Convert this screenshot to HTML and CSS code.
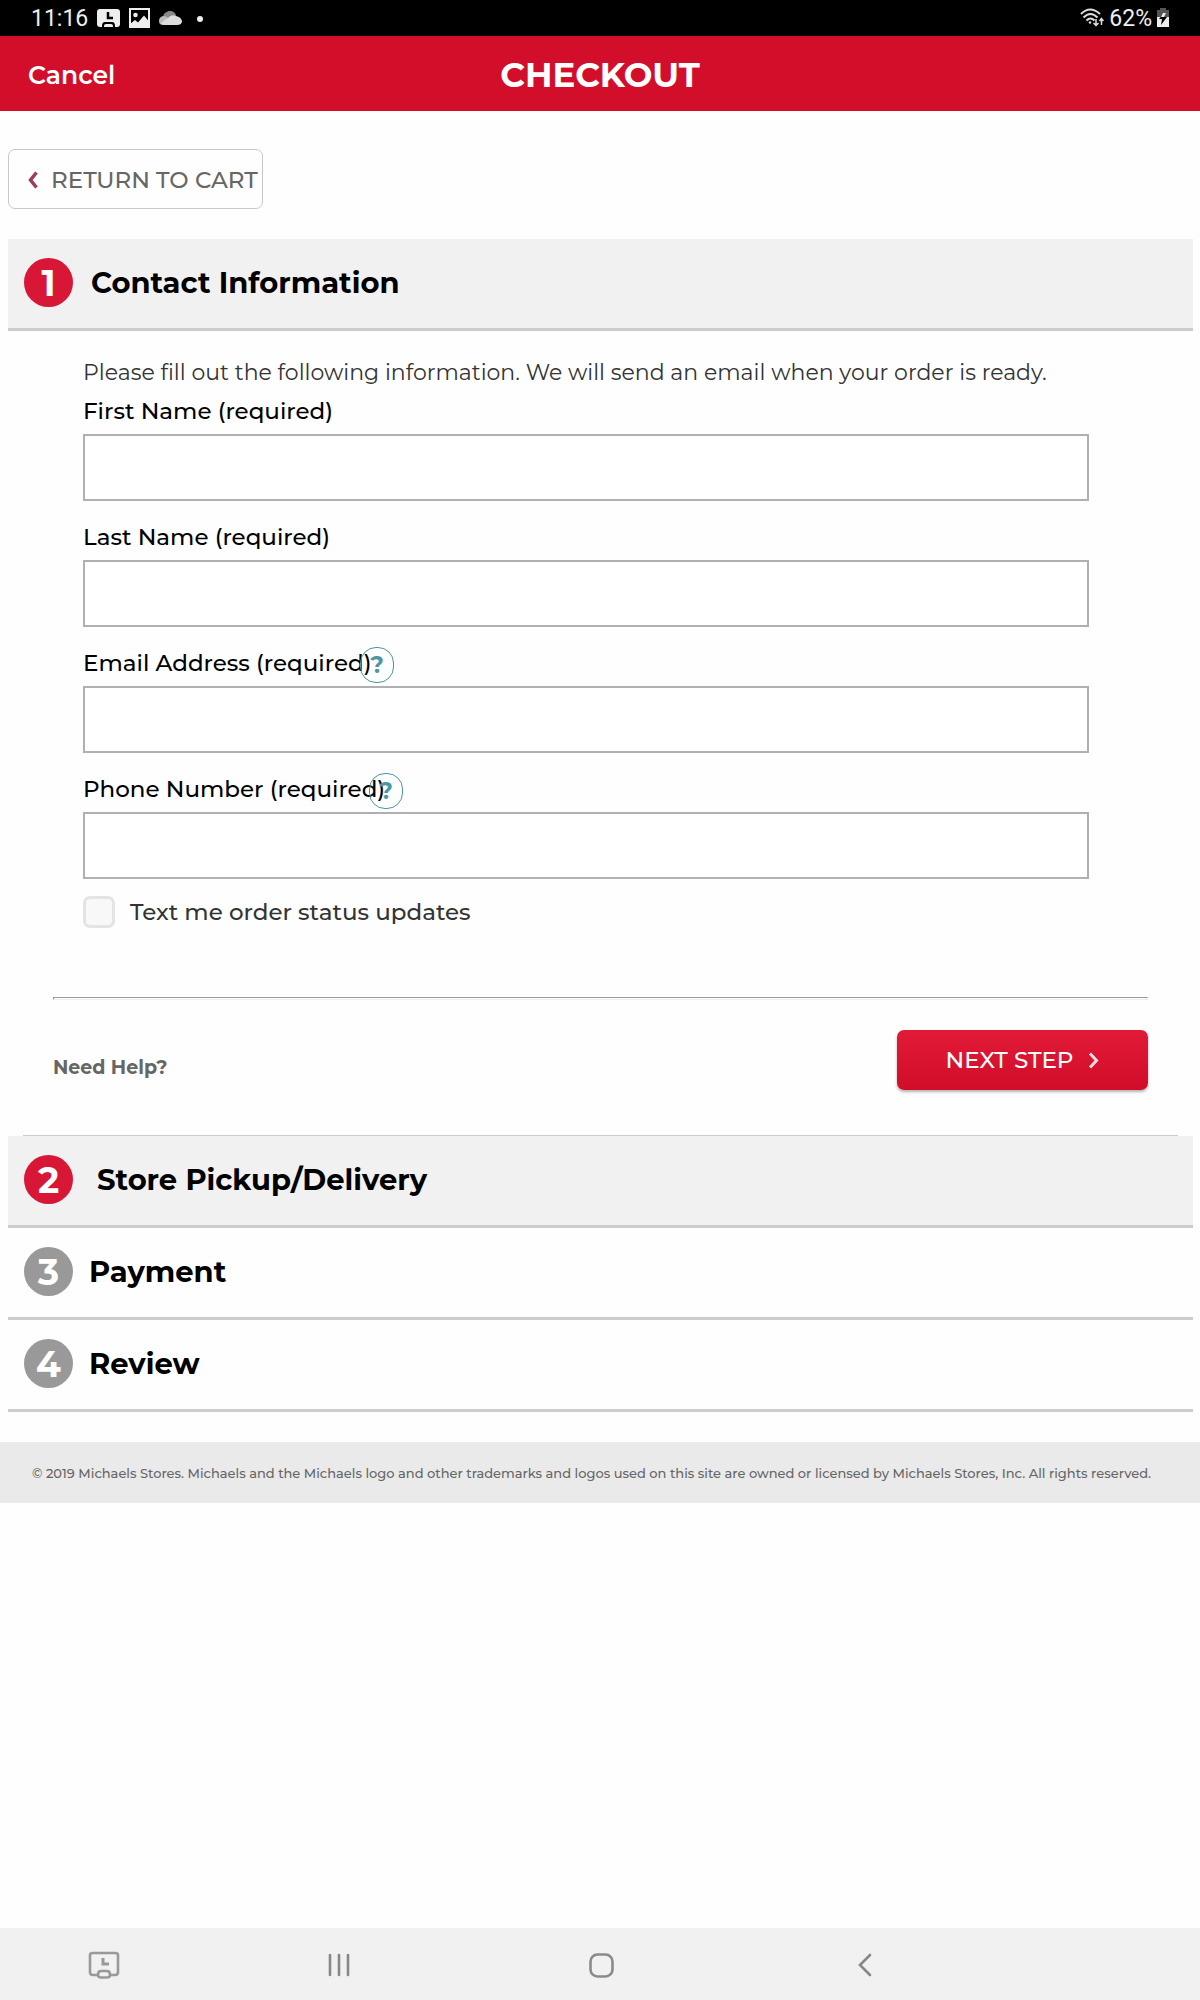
FILE: index.html
```html
<!DOCTYPE html>
<html lang="en">
<head>
<meta charset="utf-8">
<meta name="viewport" content="width=device-width, initial-scale=1">
<title>Checkout</title>
<link rel="stylesheet" href="styles.css">
</head>
<body>
<div class="status">
  <span class="status-text">11:16</span>
  <svg class="status-icon" width="23" height="20" viewBox="0 0 23 20" aria-hidden="true"><rect y="1" width="23" height="18" rx="3" fill="#eee"/><path d="M11 4v6h5" fill="none" stroke="#000" stroke-width="2.500"/><path d="M5 20v-2q0-4 3-4h7q3 0 3 4v2" fill="#000"/><path d="M7 19v-1q0-2 2-2h5q2 0 2 2v1z" fill="#eee"/></svg>
  <svg class="status-icon" width="21" height="20" viewBox="0 0 21 20" aria-hidden="true"><rect x="1" y="1" width="19" height="18" fill="none" stroke="#eee" stroke-width="2"/><circle cx="6.500" cy="7" r="2.300" fill="#eee"/><path d="M1 16l5-4 3 2.500 6-7 5 6v6H1z" fill="#eee"/><path d="M3 17l4-3 4 2 4-5 4 5v2H3z" fill="#eee"/></svg>
  <svg class="status-icon" width="23" height="16" viewBox="0 0 23 16" aria-hidden="true"><path d="M4 8C4 3 8 1 11 1s6 2 6 5h-4L8 9z" fill="#888"/><path d="M0 11q0-4 4-5 4 0 6 3l8 5-3 1H4q-4 0-4-4z" fill="#bbb"/><path d="M9 8q3-4 8-2 5 1 6 5 0 4-5 4H5q-3-1-3-2z" fill="#ddd"/></svg>
  <span class="status-dot"></span>
  <span class="status-end">
    <svg width="24" height="19" viewBox="0 0 24 19" fill="none" stroke="#ddd" stroke-width="2" aria-hidden="true"><path d="M1 6q9-9 19 0M3.500 9.500q7-7 14 0M6.500 12.500q4-4 8 0"/><circle cx="10" cy="14.500" r="1.200" fill="#ddd" stroke="none"/><path d="M16 11v6m-2.500-2l2.500 2.500 2.500-2.500M21.500 17v-6m-2 2l2-2.500 2 2.500" stroke-width="1.500"/></svg>
    <span class="status-text">62%</span>
    <svg width="12" height="19" viewBox="0 0 12 19" aria-hidden="true"><path d="M3 0h6v2h3v8H0V2h3z" fill="#555"/><path d="M0 9h12v10H0z" fill="#eee"/><path d="M7 5L2 11h3l-1 6 6-8H7l1-4z" fill="#000"/><path d="M6 5h3L7 9H4z" fill="#eee"/></svg>
  </span>
</div>

<header class="topbar">
  <button class="cancel" type="button">Cancel</button>
  <h1 class="title">CHECKOUT</h1>
</header>

<main class="main">
  <a class="return" href="#cart">
    <svg width="10" height="18" viewBox="0 0 10 18" fill="none" stroke="#a03a5b" stroke-width="3.500" aria-hidden="true"><path d="M8.500 1.500L2.500 9l6 7.500"/></svg>
    RETURN TO CART
  </a>

  <h2 class="step step-open step-first"><span class="num">1</span>Contact Information</h2>

  <form class="form">
    <div class="fields">
      <p class="intro">Please fill out the following information. We will send an email when your order is ready.</p>
      <div class="field">
        <label for="first">First Name (required)</label>
        <input id="first" type="text">
      </div>
      <div class="field">
        <label for="last">Last Name (required)</label>
        <input id="last" type="text">
      </div>
      <div class="field">
        <label for="email">Email Address (required)</label>
        <button class="help help-email" type="button" aria-label="About email address">?</button>
        <input id="email" type="email">
      </div>
      <div class="field">
        <label for="phone">Phone Number (required)</label>
        <button class="help help-phone" type="button" aria-label="About phone number">?</button>
        <input id="phone" type="tel">
      </div>
      <label class="check"><input type="checkbox">Text me order status updates</label>
    </div>
    <hr class="rule">
    <div class="actions">
      <a class="need" href="#help">Need Help?</a>
      <button class="next" type="submit">NEXT STEP
        <svg width="11" height="17" viewBox="0 0 11 17" fill="none" stroke="#fbdde3" stroke-width="3" aria-hidden="true"><path d="M2 1.500l6.500 7L2 15.500"/></svg>
      </button>
    </div>
  </form>

  <h2 class="step step-open"><span class="num num-wide">2</span>Store Pickup/Delivery</h2>
  <h2 class="step"><span class="num num-off">3</span>Payment</h2>
  <h2 class="step"><span class="num num-off">4</span>Review</h2>
</main>

<footer class="footer">© 2019 Michaels Stores. Michaels and the Michaels logo and other trademarks and logos used on this site are owned or licensed by Michaels Stores, Inc. All rights reserved.</footer>

<nav class="navbar">
  <button type="button" aria-label="Capture"><svg width="32" height="28" viewBox="0 0 32 28" fill="none" stroke="#999" stroke-width="2.600"><path d="M10 24H5q-3 0-3-3V4q0-2 3-2h22q3 0 3 2v17q0 3-3 3h-5"/><path d="M15 7v6h6" stroke-width="3"/><path d="M10 24q0-4 3-4h6q3 0 3 4 0 2.500-3 2.500h-6q-3 0-3-2.500z"/></svg></button>
  <button type="button" aria-label="Recents"><svg width="22" height="24" viewBox="0 0 22 24" stroke="#888" stroke-width="2.600" stroke-linecap="round"><path d="M2 2v20M11 2v20M20 2v20"/></svg></button>
  <button type="button" aria-label="Home"><svg width="25" height="25" viewBox="0 0 25 25"><rect x="1.500" y="1.500" width="22" height="22" rx="7" fill="none" stroke="#8a8a8a" stroke-width="2.600"/></svg></button>
  <button type="button" aria-label="Back"><svg width="14" height="24" viewBox="0 0 14 24" fill="none" stroke="#888" stroke-width="2.600" stroke-linecap="round"><path d="M12 2L2 12l10 10"/></svg></button>
</nav>
</body>
</html>
```
FILE: styles.css
```css
* {
  box-sizing: border-box;
}

body {
  margin: 0;
  min-height: 100vh;
  display: flex;
  flex-direction: column;
  background: #fefefe;
  color: #000;
  font-family: Montserrat, Inter, "Open Sans", sans-serif;
  font-size: 23px;
  font-weight: 500;
  line-height: 32px;
}

button,
input {
  font: inherit;
}

svg {
  flex: none;
}

.status {
  display: flex;
  align-items: center;
  gap: 9px;
  height: 36px;
  padding: 2px 31px 0;
  background: #000;
}

.status-text {
  font-family: Roboto, sans-serif;
  font-weight: 400;
  color: #eee;
  font-size: 23px;
}

.status-dot {
  width: 6px;
  height: 6px;
  margin-left: 6px;
  border-radius: 50%;
  background: #eee;
}

.status-end {
  display: flex;
  align-items: center;
  gap: 5px;
  margin-left: auto;
}

.status-icon,
.status-end svg {
  margin-bottom: 3px;
}

.topbar {
  display: grid;
  grid-template-columns: 1fr auto 1fr;
  align-items: center;
  height: 75px;
  padding: 2px 28px 0;
  background: #d30e2b;
  color: #fff;
}

.cancel {
  justify-self: start;
  padding: 0;
  border: 0;
  background: none;
  color: inherit;
  font-size: 25px;
  font-weight: 600;
}

.title {
  margin: 0;
  font-size: 34px;
  font-weight: 700;
}

.main {
  padding: 38px 7px 30px 8px;
}

.return {
  display: flex;
  align-items: center;
  gap: 13px;
  width: 255px;
  height: 60px;
  padding: 2px 0 0 19px;
  border: 1px solid #c8c8c8;
  border-radius: 7px;
  color: #666;
  text-decoration: none;
  white-space: nowrap;
}

.step {
  display: flex;
  align-items: center;
  gap: 16px;
  height: 92px;
  margin: 0;
  padding: 0 16px 2px;
  border-bottom: 3px solid #ccc;
  font-size: 29px;
  font-weight: 700;
}

.step-open {
  gap: 18px;
  background: #f1f1f1;
}

.step-first {
  margin-top: 30px;
}

.num {
  display: flex;
  align-items: center;
  justify-content: center;
  width: 49px;
  height: 49px;
  border-radius: 50%;
  background: #d81636;
  color: #fff;
  font-size: 36px;
}

.num-wide {
  margin-right: 6px;
}

.num-off {
  background: #999;
}

.form {
  margin: 0 15px;
  padding-bottom: 45px;
  border-bottom: 1px solid #ccc;
}

.fields {
  padding: 26px 89px 69px 60px;
}

.intro {
  margin: 0 0 6px;
  color: #333;
  font-size: 22px;
  font-weight: 400;
}

.field {
  position: relative;
  display: flex;
  flex-direction: column;
  gap: 7px;
  margin-bottom: 20px;
}

.field:nth-last-child(2) {
  margin-bottom: 17px;
}

.field label {
  align-self: start;
}

.field input {
  width: 100%;
  height: 67px;
  padding: 0 16px;
  border: 2px solid #b0b0b0;
  background: #fff;
}

.help {
  position: absolute;
  top: 0;
  width: 34px;
  height: 36px;
  padding: 0;
  border: 1px solid #4a97a1;
  border-radius: 16px;
  background: none;
  color: #4a97a1;
  font-weight: 700;
}

.help-email {
  left: 277px;
}

.help-phone {
  left: 286px;
}

.check {
  display: flex;
  align-items: center;
  gap: 15px;
  color: #333;
}

.check input {
  appearance: none;
  width: 32px;
  height: 32px;
  margin: 0;
  border: 3px solid #e4e4e4;
  border-radius: 7px;
  background: #f8f8f8;
}

.rule {
  height: 3px;
  margin: 0 30px;
  border: 1px solid #eee;
  border-top-color: #999;
  border-left-color: #999;
}

.actions {
  display: flex;
  align-items: center;
  justify-content: space-between;
  margin: 0 30px;
  padding-top: 30px;
}

.need {
  margin-top: 16px;
  color: #666;
  font-size: 19px;
  font-weight: 700;
  text-decoration: none;
}

.next {
  display: flex;
  align-items: center;
  justify-content: center;
  gap: 15px;
  width: 251px;
  height: 60px;
  border: 0;
  border-radius: 7px;
  background: linear-gradient(#e11a37, #d10d2a);
  box-shadow: 0 2px 3px rgba(0, 0, 0, 0.3);
  color: #fff;
}

.footer {
  padding: 15px 32px 14px;
  background: #eaeaea;
  color: #666;
  font-size: 13px;
  font-weight: 500;
}

.navbar {
  display: grid;
  grid-template-columns: 208fr 262fr 263fr 264fr 203fr;
  height: 72px;
  margin-top: auto;
  padding-top: 2px;
  background: #f1f1f1;
}

.navbar button {
  display: grid;
  place-items: center;
  padding: 0;
  border: 0;
  background: none;
}
```
